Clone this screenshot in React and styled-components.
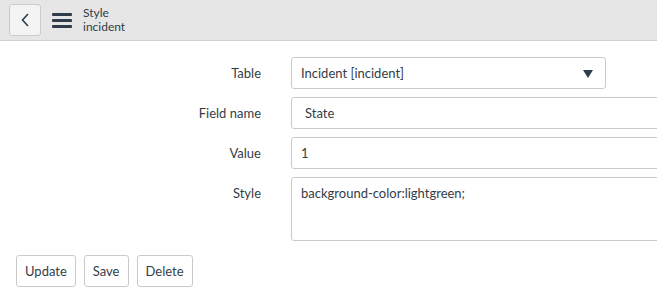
import React from "react";
import styled, { createGlobalStyle } from "styled-components";

const GlobalStyle = createGlobalStyle`
  html, body {
    margin: 0;
    padding: 0;
    background: #fff;
    overflow: hidden;
  }
  body {
    font-family: "Lato", "Open Sans", sans-serif;
    font-size: 13px;
    color: #343d47;
  }
`;

const Header = styled.header`
  display: flex;
  align-items: center;
  height: 40px;
  padding-left: 9px;
  background: #e6e6e6;
  border-bottom: 1px solid #cfcfcf;
`;

const BackButton = styled.button`
  display: flex;
  align-items: center;
  justify-content: center;
  width: 32px;
  height: 32px;
  padding: 0;
  background: #f4f4f4;
  border: 1px solid #cbcbcb;
  border-radius: 3px;
`;

const MenuIcon = styled.div`
  display: flex;
  flex-direction: column;
  gap: 3px;
  margin-left: 11px;
  width: 20px;
  span {
    display: block;
    height: 3px;
    background: #2e3d49;
    border-radius: 1px;
  }
`;

const TitleBlock = styled.div`
  display: flex;
  flex-direction: column;
  margin-left: 11px;
  line-height: 14px;
  font-size: 12px;
  color: #2e3d49;
`;

const Form = styled.div`
  padding-top: 16px;
  overflow: hidden;
`;

const Row = styled.div`
  display: grid;
  grid-template-columns: 261px 1fr;
  column-gap: 30px;
  margin-bottom: 8px;
`;

const Label = styled.label`
  text-align: right;
  line-height: 32px;
  color: #343d47;
`;

const Field = styled.div`
  position: relative;
  box-sizing: border-box;
  width: ${({ $width }) => $width || "calc(100% + 6px)"};
  height: ${({ $height }) => $height || "32px"};
  padding: ${({ $multi }) => ($multi ? "7px 9px" : "0 9px")};
  padding-left: ${({ $indent }) => $indent || "9px"};
  display: flex;
  align-items: ${({ $multi }) => ($multi ? "flex-start" : "center")};
  border: 1px solid #cacaca;
  border-radius: 3px;
  background: #fff;
  color: #343d47;
`;

const Caret = styled.svg`
  position: absolute;
  right: 12px;
  top: 12px;
`;

const Actions = styled.div`
  display: flex;
  gap: 8px;
  padding: 6px 0 0 16px;
`;

const Button = styled.button`
  height: 32px;
  padding: 0 8px;
  background: #fff;
  border: 1px solid #cacaca;
  border-radius: 3px;
  font-family: inherit;
  font-size: 13px;
  color: #343d47;
`;

export default function App() {
  return (
    <>
      <GlobalStyle />
      <Header>
        <BackButton aria-label="Back">
          <svg width="10" height="16" viewBox="0 0 10 16">
            <path d="M8 2L2.5 8L8 14" fill="none" stroke="#2e3d49" strokeWidth="1.6" />
          </svg>
        </BackButton>
        <MenuIcon>
          <span />
          <span />
          <span />
        </MenuIcon>
        <TitleBlock>
          <span>Style</span>
          <span>incident</span>
        </TitleBlock>
      </Header>
      <Form>
        <Row>
          <Label>Table</Label>
          <Field $width="315px">
            Incident [incident]
            <Caret width="10" height="8" viewBox="0 0 10 8">
              <path d="M0 0H10L5 8Z" fill="#2e3d49" />
            </Caret>
          </Field>
        </Row>
        <Row>
          <Label>Field name</Label>
          <Field $indent="13px">State</Field>
        </Row>
        <Row>
          <Label>Value</Label>
          <Field>1</Field>
        </Row>
        <Row>
          <Label>Style</Label>
          <Field $multi $height="64px">background-color:lightgreen;</Field>
        </Row>
        <Actions>
          <Button>Update</Button>
          <Button>Save</Button>
          <Button>Delete</Button>
        </Actions>
      </Form>
    </>
  );
}
